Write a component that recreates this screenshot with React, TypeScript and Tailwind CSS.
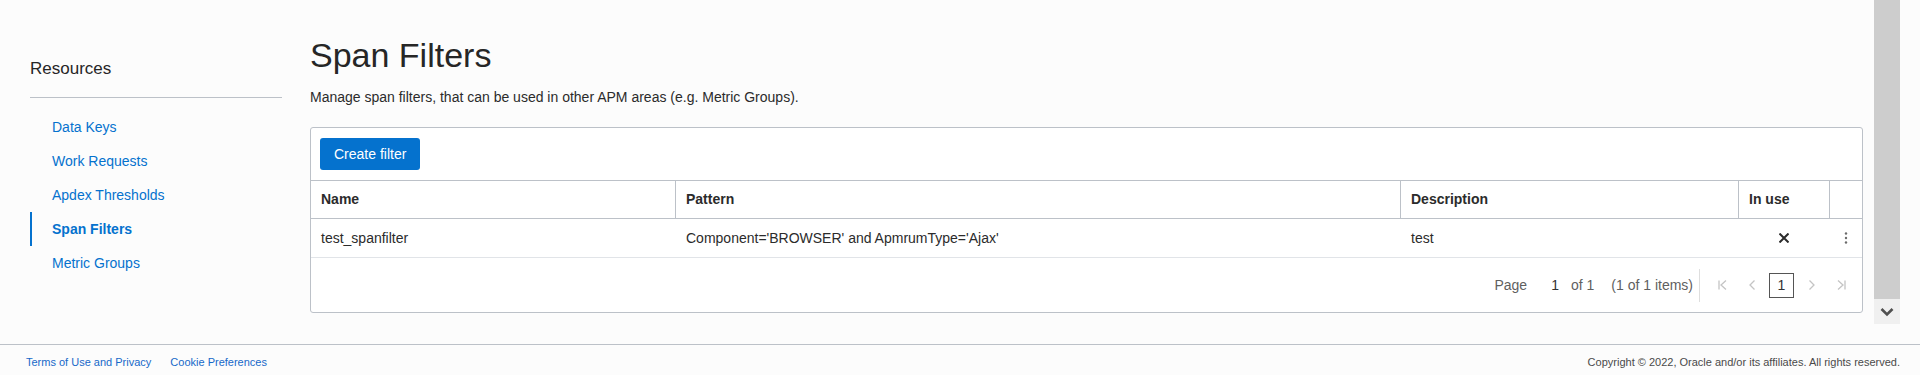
import React from 'react';

const navItems = ['Data Keys', 'Work Requests', 'Apdex Thresholds', 'Span Filters', 'Metric Groups'];

function Sidebar() {
  return (
    <aside className="w-[310px] shrink-0 pl-[30px] pr-[28px]">
      <div className="pt-[59px] text-[17px] leading-[20px] text-[#262626]">Resources</div>
      <div className="mt-[18px] h-px bg-[#bcc1c8]" />
      <nav className="mt-[12px] flex flex-col">
        {navItems.map((item) => {
          const active = item === 'Span Filters';
          return (
            <a
              key={item}
              className={
                active
                  ? 'flex h-[34px] items-center border-l-2 border-[#0572ce] pl-[20px] text-[14px] font-bold text-[#0572ce]'
                  : 'flex h-[34px] items-center border-l-2 border-transparent pl-[20px] text-[14px] text-[#0572ce]'
              }
            >
              {item}
            </a>
          );
        })}
      </nav>
    </aside>
  );
}

function XMark() {
  return (
    <svg width="10" height="10" viewBox="0 0 10 10">
      <path d="M1.2 1.2 L8.8 8.8 M8.8 1.2 L1.2 8.8" stroke="#2b2b2b" strokeWidth="2" strokeLinecap="square" />
    </svg>
  );
}

function Kebab() {
  return (
    <svg width="4" height="12" viewBox="0 0 4 12">
      <circle cx="2" cy="1.5" r="1.2" fill="#6b6b6b" />
      <circle cx="2" cy="6" r="1.2" fill="#6b6b6b" />
      <circle cx="2" cy="10.5" r="1.2" fill="#6b6b6b" />
    </svg>
  );
}

function PageIcon({ kind }: { kind: 'first' | 'prev' | 'next' | 'last' }) {
  const d = {
    first: 'M2 1.5 V10.5 M9 1.5 L4 6 L9 10.5',
    prev: 'M7.5 1.5 L3 6 L7.5 10.5',
    next: 'M3.5 1.5 L8 6 L3.5 10.5',
    last: 'M9 1.5 V10.5 M2 1.5 L7 6 L2 10.5',
  }[kind];
  return (
    <div className="flex h-[30px] w-[30px] items-center justify-center">
      <svg width="11" height="12" viewBox="0 0 11 12">
        <path d={d} stroke="#c4c4c4" strokeWidth="1.3" fill="none" />
      </svg>
    </div>
  );
}

function FiltersTable() {
  const head = 'flex h-[37px] items-center px-[10px] text-[14px] font-bold text-[#2b2b2b]';
  const cell = 'flex h-[38px] items-center px-[10px] text-[14px] text-[#2b2b2b]';
  return (
    <div className="mt-[20px] rounded-[3px] border border-[#bcc1c8] bg-white">
      <div className="py-[10px] pl-[9px]">
        <button className="h-[32px] rounded-[3px] bg-[#0572ce] px-[14px] text-[14px] text-white">Create filter</button>
      </div>
      <div className="grid grid-cols-[364px_725px_338px_91px_1fr] border-y border-[#bcc1c8]">
        <div className={head}>Name</div>
        <div className={head + ' border-l border-[#bcc1c8]'}>Pattern</div>
        <div className={head + ' border-l border-[#bcc1c8]'}>Description</div>
        <div className={head + ' border-l border-[#bcc1c8]'}>In use</div>
        <div className="border-l border-[#bcc1c8]" />
      </div>
      <div className="grid grid-cols-[364px_725px_338px_91px_1fr] border-b border-[#e1e4e8]">
        <div className={cell}>test_spanfilter</div>
        <div className={cell + ' pl-[11px]'}>Component='BROWSER' and ApmrumType='Ajax'</div>
        <div className={cell + ' pl-[11px]'}>test</div>
        <div className="flex h-[38px] items-center justify-center pl-px">
          <XMark />
        </div>
        <div className="flex h-[38px] items-center justify-center pl-px">
          <Kebab />
        </div>
      </div>
      <div className="flex h-[54px] items-center justify-end pr-[6px] text-[14px] text-[#5f5f5f]">
        <span className="mr-[24px]">Page</span>
        <span className="mr-[12px] text-[#333]">1</span>
        <span className="mr-[17px]">of 1</span>
        <span>(1 of 1 items)</span>
        <div className="ml-[6px] mr-[7px] h-[33px] w-px bg-[#dedede]" />
        <PageIcon kind="first" />
        <PageIcon kind="prev" />
        <div className="mx-[2px] flex h-[25px] w-[25px] items-center justify-center border border-[#555] text-[#333]">1</div>
        <PageIcon kind="next" />
        <PageIcon kind="last" />
      </div>
    </div>
  );
}

function Scrollbar() {
  return (
    <div className="flex w-[26px] shrink-0 flex-col">
      <div className="h-[299px] bg-[#cdcdcd]" />
      <div className="flex h-[25px] items-center justify-center bg-[#f0f0f0]">
        <svg width="14" height="10" viewBox="0 0 14 10">
          <path d="M1.5 2 L7 7.5 L12.5 2" stroke="#505050" strokeWidth="2.6" fill="none" />
        </svg>
      </div>
    </div>
  );
}

export default function App() {
  return (
    <div
      className="flex h-[375px] w-[1920px] flex-col bg-[#fcfcfc]"
      style={{ fontFamily: '"Liberation Sans", Arial, sans-serif' }}
    >
      <div className="flex h-[345px] shrink-0 border-b border-[#bcc1c8]">
        <Sidebar />
        <main className="w-[1553px] shrink-0">
          <h1 className="pt-[35px] text-[34px] leading-[40px] text-[#262626]">Span Filters</h1>
          <p className="mt-[12px] text-[14px] leading-[20px] text-[#2b2b2b]">
            Manage span filters, that can be used in other APM areas (e.g. Metric Groups).
          </p>
          <FiltersTable />
        </main>
        <div className="w-[11px] shrink-0" />
        <Scrollbar />
        <div className="w-[20px] shrink-0" />
      </div>
      <footer className="flex h-[30px] items-center justify-between pl-[26px] pr-[20px] pt-[4px] text-[11px]">
        <div className="flex gap-[19px] text-[#1769c9]">
          <a>Terms of Use and Privacy</a>
          <a>Cookie Preferences</a>
        </div>
        <div className="text-[#4a4a4a]">Copyright © 2022, Oracle and/or its affiliates. All rights reserved.</div>
      </footer>
    </div>
  );
}
